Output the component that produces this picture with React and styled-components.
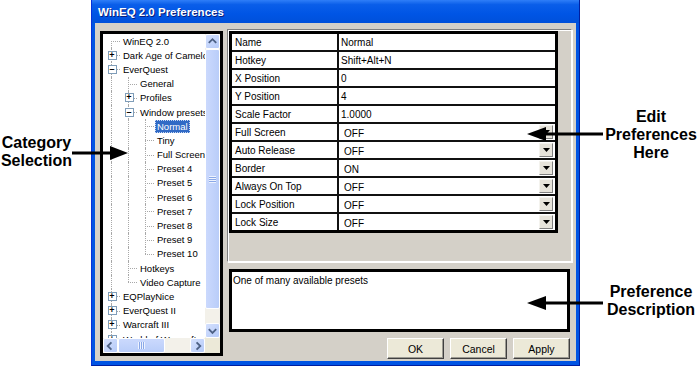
import React from 'react';
import styled, { createGlobalStyle } from 'styled-components';

const GlobalStyle = createGlobalStyle`
  html, body { margin: 0; padding: 0; background: #fff; }
  body {
    width: 698px;
    height: 367px;
    overflow: hidden;
    font-family: "Liberation Sans", Arial, sans-serif;
  }
`;

const tree = [
  { label: 'WinEQ 2.0', level: 0 },
  { label: 'Dark Age of Camelot', level: 0, exp: '+' },
  { label: 'EverQuest', level: 0, exp: '-' },
  { label: 'General', level: 1 },
  { label: 'Profiles', level: 1, exp: '+' },
  { label: 'Window presets', level: 1, exp: '-' },
  { label: 'Normal', level: 2, selected: true },
  { label: 'Tiny', level: 2 },
  { label: 'Full Screen', level: 2 },
  { label: 'Preset 4', level: 2 },
  { label: 'Preset 5', level: 2 },
  { label: 'Preset 6', level: 2 },
  { label: 'Preset 7', level: 2 },
  { label: 'Preset 8', level: 2 },
  { label: 'Preset 9', level: 2 },
  { label: 'Preset 10', level: 2 },
  { label: 'Hotkeys', level: 1 },
  { label: 'Video Capture', level: 1 },
  { label: 'EQPlayNice', level: 0, exp: '+' },
  { label: 'EverQuest II', level: 0, exp: '+' },
  { label: 'Warcraft III', level: 0, exp: '+' },
  { label: 'World of Warcraft', level: 0, exp: '+' },
];

// work out which dotted lines each row needs
const hasNext = (i) => {
  const lvl = tree[i].level;
  for (let j = i + 1; j < tree.length; j++) {
    if (tree[j].level < lvl) return false;
    if (tree[j].level === lvl) return true;
  }
  return false;
};
const rows = tree.map((node, i) => {
  const guides = [];
  for (let k = 0; k < node.level; k++) {
    let a = i;
    while (tree[a].level !== k) a--;
    guides.push(hasNext(a));
  }
  return { ...node, guides, first: i === 0, next: hasNext(i) };
});

const props = [
  ['Name', 'Normal'],
  ['Hotkey', 'Shift+Alt+N'],
  ['X Position', '0'],
  ['Y Position', '4'],
  ['Scale Factor', '1.0000'],
  ['Full Screen', 'OFF', true],
  ['Auto Release', 'OFF', true],
  ['Border', 'ON', true],
  ['Always On Top', 'OFF', true],
  ['Lock Position', 'OFF', true],
  ['Lock Size', 'OFF', true],
];

function Chevron({ dir }) {
  const pts = {
    up: '3,8 7,4 11,8',
    down: '3,5 7,9 11,5',
    left: '8,3 4,7 8,11',
    right: '6,3 10,7 6,11',
  }[dir];
  return (
    <svg width="14" height="14" viewBox="0 0 14 14">
      <polyline points={pts} fill="none" stroke="#4D6185" strokeWidth="2" />
    </svg>
  );
}

function Arrow({ dir }) {
  if (dir === 'right') {
    return (
      <svg width="56" height="16" viewBox="0 0 56 16">
        <line x1="0" y1="8" x2="40" y2="8" stroke="#000" strokeWidth="3" />
        <polygon points="38,1 56,8 38,15" fill="#000" />
      </svg>
    );
  }
  return (
    <svg width="76" height="16" viewBox="0 0 76 16">
      <polygon points="0,8 19,1 19,15" fill="#000" />
      <line x1="17" y1="8" x2="76" y2="8" stroke="#000" strokeWidth="3" />
    </svg>
  );
}

export default function App() {
  return (
    <Page>
      <GlobalStyle />
      <LeftNote>
        <Note>Category<br />Selection</Note>
      </LeftNote>

      <Window>
        <TitleBar>WinEQ 2.0 Preferences</TitleBar>
        <Client>
          <TreeBox>
            <TreeView>
              {rows.map((r) => (
                <TreeRow key={r.label}>
                  {r.guides.map((g, k) => (
                    <Guide key={k} $line={g} />
                  ))}
                  <Elbow $top={!r.first} $bottom={r.next}>
                    {r.exp && <Expander>{r.exp === '+' ? '+' : '–'}</Expander>}
                  </Elbow>
                  <Label $selected={r.selected}>{r.label}</Label>
                </TreeRow>
              ))}
            </TreeView>
            <VScroll>
              <ScrollBtn><Chevron dir="up" /></ScrollBtn>
              <VThumb><Grip $vertical /></VThumb>
              <Track />
              <ScrollBtn><Chevron dir="down" /></ScrollBtn>
            </VScroll>
            <HScroll>
              <ScrollBtn><Chevron dir="left" /></ScrollBtn>
              <HThumb><Grip /></HThumb>
              <Track />
              <ScrollBtn><Chevron dir="right" /></ScrollBtn>
            </HScroll>
            <Corner />
          </TreeBox>

          <RightCol>
            <GridWrap>
              <GridBox>
                {props.map(([name, value, combo]) => (
                  <PropRow key={name}>
                    <NameCell>{name}</NameCell>
                    <ValueCell $combo={combo}>
                      <span>{value}</span>
                      {combo && (
                        <DropBtn>
                          <svg width="7" height="4" viewBox="0 0 7 4">
                            <polygon points="0,0 7,0 3.5,4" fill="#000" />
                          </svg>
                        </DropBtn>
                      )}
                    </ValueCell>
                  </PropRow>
                ))}
              </GridBox>
            </GridWrap>
            <Description>One of many available presets</Description>
            <ButtonRow>
              <Button>OK</Button>
              <Button>Cancel</Button>
              <Button>Apply</Button>
            </ButtonRow>
          </RightCol>
        </Client>
      </Window>

      <RightNotes>
        <Note $top={108}>Edit<br />Preferences<br />Here</Note>
        <Note $top={283 - 162}>Preference<br />Description</Note>
      </RightNotes>

      <ArrowSpot $x={72} $y={145}><Arrow dir="right" /></ArrowSpot>
      <ArrowSpot $x={527} $y={126}><Arrow dir="left" /></ArrowSpot>
      <ArrowSpot $x={527} $y={295}><Arrow dir="left" /></ArrowSpot>
    </Page>
  );
}

const Page = styled.div`
  position: relative;
  display: flex;
  width: 698px;
  height: 367px;
`;

const LeftNote = styled.div`
  width: 91px;
  padding-top: 134px;
  box-sizing: border-box;
`;

const RightNotes = styled.div`
  width: 118px;
  padding-left: 24px;
  box-sizing: border-box;
`;

const Note = styled.div`
  width: ${(p) => (p.$top !== undefined ? '94px' : '73px')};
  margin-top: ${(p) => (p.$top !== undefined ? p.$top : 0)}px;
  font-size: 16px;
  font-weight: bold;
  line-height: 18px;
  text-align: center;
  color: #000;
`;

const ArrowSpot = styled.div`
  position: absolute;
  left: ${(p) => p.$x}px;
  top: ${(p) => p.$y}px;
  line-height: 0;
`;

const Window = styled.div`
  width: 489px;
  height: 366px;
  display: flex;
  flex-direction: column;
  background: #0054e3;
  padding: 0 3px 4px 3px;
  box-sizing: border-box;
  border-left: 1px solid #0831d9;
  border-right: 1px solid #001ea0;
  border-bottom: 1px solid #001ea0;
`;

const TitleBar = styled.div`
  height: 24px;
  margin: 0 -3px;
  padding-left: 6px;
  display: flex;
  align-items: center;
  background: linear-gradient(#2f7ef8 0%, #0a5ee9 20%, #0055e5 60%, #0050da 100%);
  color: #fff;
  font-family: "Liberation Sans", Arial, sans-serif;
  font-size: 11.5px;
  font-weight: bold;
  text-shadow: 1px 1px 0 #0a1e7a;
`;

const Client = styled.div`
  flex: 1;
  display: flex;
  gap: 4px;
  padding: 6px 4px 2px 5px;
  background: #d4d0c8;
`;

const TreeBox = styled.div`
  width: 123px;
  height: 325px;
  margin-top: 2px;
  box-sizing: border-box;
  border: 3px solid #000;
  display: grid;
  grid-template-columns: 1fr 15px;
  grid-template-rows: 1fr 15px;
  background: #fff;
`;

const TreeView = styled.div`
  overflow: hidden;
  background: #fff;
  font-size: 9.5px;
  color: #000;
`;

const TreeRow = styled.div`
  display: flex;
  align-items: center;
  height: 14.2px;
  white-space: nowrap;
`;

const Guide = styled.div`
  position: relative;
  flex: none;
  width: 17px;
  height: 100%;
  &::before {
    content: '';
    display: ${(p) => (p.$line ? 'block' : 'none')};
    position: absolute;
    left: 8px;
    top: 0;
    bottom: 0;
    border-left: 1px dotted #a8a8a8;
  }
`;

const Elbow = styled.div`
  position: relative;
  flex: none;
  width: 17px;
  height: 100%;
  display: flex;
  align-items: center;
  justify-content: center;
  &::before {
    content: '';
    position: absolute;
    left: 8px;
    top: ${(p) => (p.$top ? '0' : '50%')};
    bottom: ${(p) => (p.$bottom ? '0' : '50%')};
    border-left: 1px dotted #a8a8a8;
  }
  &::after {
    content: '';
    position: absolute;
    left: 8px;
    right: 0;
    top: 50%;
    border-top: 1px dotted #a8a8a8;
  }
`;

const Expander = styled.div`
  position: relative;
  z-index: 1;
  width: 9px;
  height: 9px;
  box-sizing: border-box;
  border: 1px solid #7f9db9;
  background: #fff;
  font-size: 9px;
  line-height: 6px;
  font-weight: bold;
  text-align: center;
  color: #000;
  margin-left: 1px;
`;

const Label = styled.span`
  margin-left: 1px;
  padding: 0 2px;
  line-height: 13px;
  background: ${(p) => (p.$selected ? '#316ac5' : 'transparent')};
  color: ${(p) => (p.$selected ? '#fff' : '#000')};
  outline: ${(p) => (p.$selected ? '1px dotted #c8d8f4' : 'none')};
  outline-offset: -1px;
`;

const VScroll = styled.div`
  display: flex;
  flex-direction: column;
  background: #f3f1ea;
`;

const HScroll = styled.div`
  display: flex;
  background: #f3f1ea;
`;

const Corner = styled.div`
  background: #ece9d8;
`;

const ScrollBtn = styled.div`
  flex: none;
  width: 15px;
  height: 15px;
  box-sizing: border-box;
  border: 1px solid #fff;
  border-radius: 2px;
  background: linear-gradient(135deg, #d4e0fd, #b6cbf9);
  display: flex;
  align-items: center;
  justify-content: center;
`;

const Track = styled.div`
  flex: 1;
`;

const VThumb = styled.div`
  flex: none;
  height: 260px;
  box-sizing: border-box;
  border: 1px solid #fff;
  border-radius: 2px;
  background: linear-gradient(90deg, #cbd9fd, #b9cdf9);
  display: flex;
  align-items: center;
  justify-content: center;
`;

const HThumb = styled.div`
  flex: none;
  width: 47px;
  box-sizing: border-box;
  border: 1px solid #fff;
  border-radius: 2px;
  background: linear-gradient(#cbd9fd, #b9cdf9);
  display: flex;
  align-items: center;
  justify-content: center;
`;

const Grip = styled.div`
  width: 7px;
  height: 7px;
  background: ${(p) =>
    p.$vertical
      ? 'repeating-linear-gradient(#eef3fe 0 1px, #8aa8e8 1px 2px)'
      : 'repeating-linear-gradient(90deg, #eef3fe 0 1px, #8aa8e8 1px 2px)'};
`;

const RightCol = styled.div`
  width: 345px;
  display: flex;
  flex-direction: column;
`;

const GridWrap = styled.div`
  height: 233px;
  box-sizing: border-box;
  border: 1px solid #808080;
  border-right-color: #fff;
  border-bottom-color: #fff;
  box-shadow: inset 1px 1px 0 #fff, 1px 1px 0 #fff;
  background: #d4d0c8;
`;

const GridBox = styled.div`
  width: 329px;
  margin: 1px 0 0 1px;
  box-sizing: border-box;
  border: 3px solid #000;
  background: #fff;
`;

const PropRow = styled.div`
  display: grid;
  grid-template-columns: 107px 1fr;
  height: 18px;
  box-sizing: border-box;
  border-bottom: 2px solid #111;
  font-size: 10px;
  &:last-child {
    border-bottom: none;
    height: 16px;
  }
`;

const NameCell = styled.div`
  display: flex;
  align-items: center;
  padding-left: 3px;
  border-right: 2px solid #111;
  white-space: nowrap;
`;

const ValueCell = styled.div`
  display: flex;
  align-items: center;
  justify-content: space-between;
  padding-left: ${(p) => (p.$combo ? '5px' : '2px')};
  padding-right: 2px;
  & > span {
    padding-top: ${(p) => (p.$combo ? '2px' : '0')};
  }
`;

const DropBtn = styled.div`
  width: 14px;
  height: 14px;
  box-sizing: border-box;
  border: 1px solid;
  border-color: #f4f3ee #808080 #808080 #f4f3ee;
  background: #e6e3da;
  display: flex;
  align-items: center;
  justify-content: center;
`;

const Description = styled.div`
  height: 63px;
  width: 341px;
  margin: 7px 0 0 2px;
  box-sizing: border-box;
  border: 3px solid #000;
  background: #fff;
  font-size: 10px;
  padding: 3px 1px;
`;

const ButtonRow = styled.div`
  display: flex;
  justify-content: flex-end;
  gap: 6px;
  margin-top: 6px;
  padding-right: 2px;
`;

const Button = styled.div`
  width: 57px;
  height: 21px;
  box-sizing: border-box;
  border: 1px solid;
  border-color: #fff #404040 #404040 #fff;
  box-shadow: inset -1px -1px 0 #9c9a92;
  background: #ece9d8;
  display: flex;
  align-items: center;
  justify-content: center;
  font-size: 10.5px;
  color: #000;
`;
